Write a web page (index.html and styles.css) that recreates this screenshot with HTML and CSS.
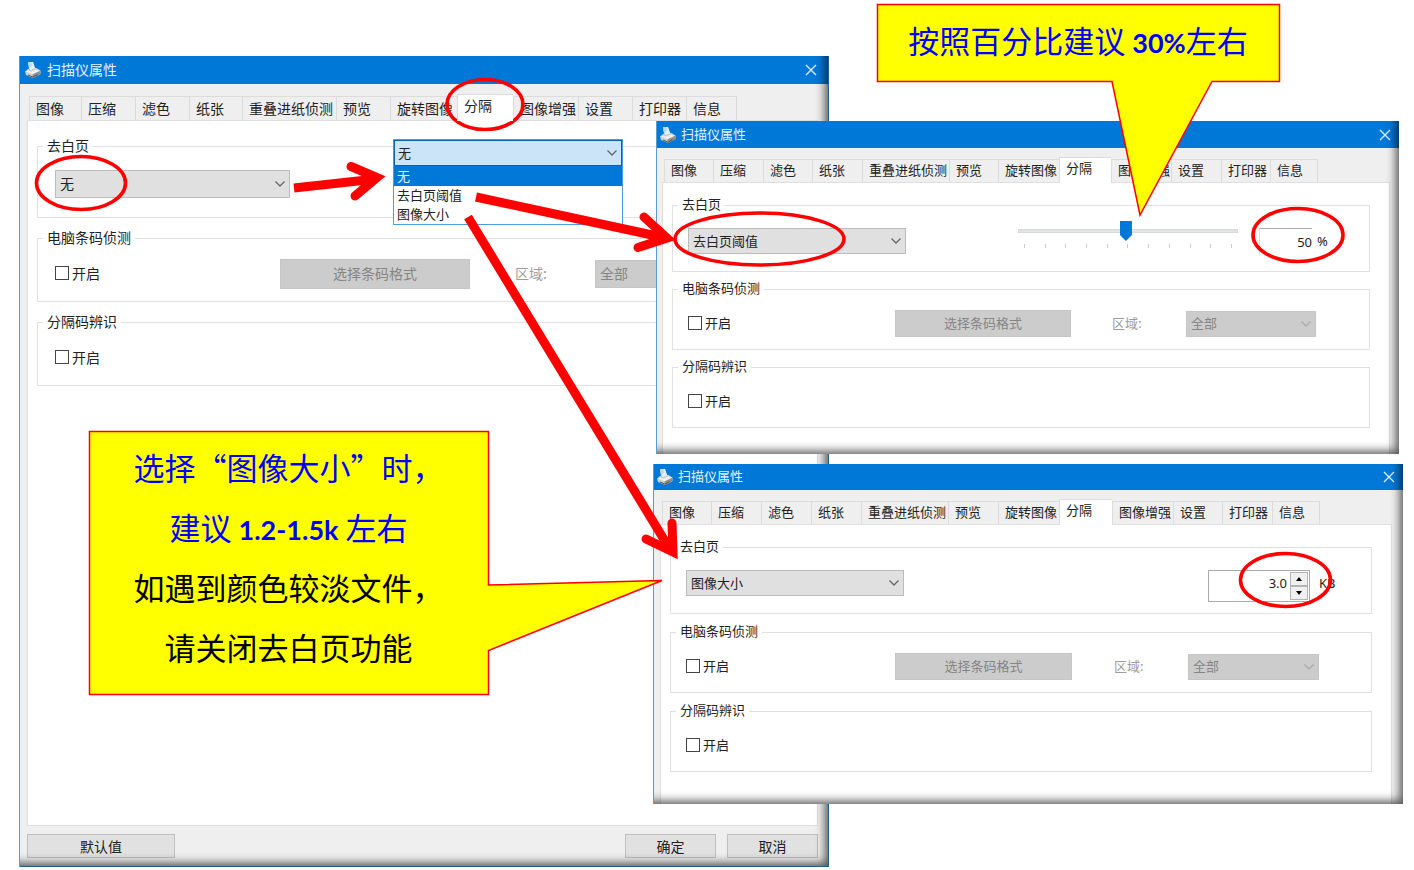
FILE: index.html
```html
<!DOCTYPE html>
<html lang="zh-CN">
<head>
<meta charset="utf-8">
<title>扫描仪属性</title>
<link rel="stylesheet" href="styles.css">
</head>
<body>
<svg class="defs" aria-hidden="true">
  <symbol id="printer" viewBox="0 0 16 16">
    <path d="M3 0l5-.2 2.500 7.200-6 1.600z" fill="#e6f3ff"/>
    <path d="M3 0l3-.1 1.500 3.600-3.500 3z" fill="#b9dcf8"/>
    <path d="M0 9.500l3.500-3 1 2 6.500-2.700L15.500 8.500v3.500L8 16l-7-3z" fill="#cfcfca"/>
    <path d="M1 9.600l6.500 2.700 7-3.500-3-1.500-5.500 2.400-2-1.400z" fill="#f0f0ec"/>
    <path d="M7.500 12.500l8-3.700V12.300L8 16z" fill="#8b8f94"/>
    <path d="M3 13l5 2.200 4.500-2.600" fill="none" stroke="#5a5142"/>
  </symbol>
  <symbol id="close" viewBox="0 0 12 12"><path d="M1 1l10 10M11 1L1 11" fill="none" stroke="#d9ecfb" stroke-width="1.400"/></symbol>
  <symbol id="chevron" viewBox="0 0 12 8"><path d="M1.500 1.500L6 6l4.500-4.500" fill="none" stroke="currentColor" stroke-width="1.300"/></symbol>
</svg>
<main class="board">

  <section class="window main-window" aria-label="扫描仪属性">
    <header class="title"><svg class="printer"><use href="#printer"/></svg><span>扫描仪属性</span><button class="close" aria-label="关闭"><svg><use href="#close"/></svg></button></header>
    <div class="content">
      <nav class="tabs"><button>图像</button><button>压缩</button><button>滤色</button><button>纸张</button><button>重叠进纸侦测</button><button>预览</button><button>旋转图像</button><button class="active">分隔</button><button>图像增强</button><button>设置</button><button>打印器</button><button>信息</button></nav>
      <div class="panel">
        <fieldset><legend>去白页</legend>
          <div class="row first">
            <span class="combo wide"><select aria-label="去白页"><option>无</option></select><svg><use href="#chevron"/></svg></span>
          </div>
        </fieldset>
        <fieldset><legend>电脑条码侦测</legend>
          <div class="row">
            <label class="check"><input type="checkbox">开启</label>
            <button class="format" disabled>选择条码格式</button>
            <label class="area" for="area1">区域:</label>
            <span class="combo off"><select id="area1" disabled><option>全部</option></select><svg><use href="#chevron"/></svg></span>
          </div>
        </fieldset>
        <fieldset><legend>分隔码辨识</legend>
          <div class="row"><label class="check"><input type="checkbox">开启</label></div>
        </fieldset>
      </div>
      <footer class="actions"><button class="default">默认值</button><button>确定</button><button>取消</button></footer>
    </div>
  </section>

  <div class="dropdown">
    <span class="combo"><select aria-label="去白页选项"><option>无</option></select><svg><use href="#chevron"/></svg></span>
    <ul role="listbox" aria-label="去白页选项">
      <li role="option" aria-selected="true">无</li>
      <li role="option">去白页阈值</li>
      <li role="option">图像大小</li>
    </ul>
  </div>

  <section class="window threshold-window" aria-label="去白页阈值">
    <header class="title"><svg class="printer"><use href="#printer"/></svg><span>扫描仪属性</span><button class="close" aria-label="关闭"><svg><use href="#close"/></svg></button></header>
    <div class="content">
      <nav class="tabs"><button>图像</button><button>压缩</button><button>滤色</button><button>纸张</button><button>重叠进纸侦测</button><button>预览</button><button>旋转图像</button><button class="active">分隔</button><button>图像增强</button><button>设置</button><button>打印器</button><button>信息</button></nav>
      <div class="panel">
        <fieldset><legend>去白页</legend>
          <div class="row first">
            <span class="combo wide"><select aria-label="去白页"><option>去白页阈值</option></select><svg><use href="#chevron"/></svg></span>
            <div class="slider">
              <input type="range" min="0" max="100" value="49" aria-label="阈值">
              <div class="ticks"><i></i><i></i><i></i><i></i><i></i><i></i><i></i><i></i><i></i><i></i><i></i></div>
            </div>
            <label class="percent"><input type="text" value="50">%</label>
          </div>
        </fieldset>
        <fieldset><legend>电脑条码侦测</legend>
          <div class="row">
            <label class="check"><input type="checkbox">开启</label>
            <button class="format" disabled>选择条码格式</button>
            <label class="area" for="area2">区域:</label>
            <span class="combo off"><select id="area2" disabled><option>全部</option></select><svg><use href="#chevron"/></svg></span>
          </div>
        </fieldset>
        <fieldset><legend>分隔码辨识</legend>
          <div class="row"><label class="check"><input type="checkbox">开启</label></div>
        </fieldset>
      </div>
    </div>
  </section>

  <section class="window size-window" aria-label="图像大小">
    <header class="title"><svg class="printer"><use href="#printer"/></svg><span>扫描仪属性</span><button class="close" aria-label="关闭"><svg><use href="#close"/></svg></button></header>
    <div class="content">
      <nav class="tabs"><button>图像</button><button>压缩</button><button>滤色</button><button>纸张</button><button>重叠进纸侦测</button><button>预览</button><button>旋转图像</button><button class="active">分隔</button><button>图像增强</button><button>设置</button><button>打印器</button><button>信息</button></nav>
      <div class="panel">
        <fieldset><legend>去白页</legend>
          <div class="row first">
            <span class="combo wide"><select aria-label="去白页"><option>图像大小</option></select><svg><use href="#chevron"/></svg></span>
            <div class="spin">
              <input id="size" type="text" value="3.0">
              <span class="steps"><button aria-label="增加"><svg viewBox="0 0 6 4"><path d="M0 4l3-4 3 4z"/></svg></button><button aria-label="减少"><svg viewBox="0 0 6 4"><path d="M0 0l3 4 3-4z"/></svg></button></span>
            </div>
            <label class="unit" for="size">KB</label>
          </div>
        </fieldset>
        <fieldset><legend>电脑条码侦测</legend>
          <div class="row">
            <label class="check"><input type="checkbox">开启</label>
            <button class="format" disabled>选择条码格式</button>
            <label class="area" for="area3">区域:</label>
            <span class="combo off"><select id="area3" disabled><option>全部</option></select><svg><use href="#chevron"/></svg></span>
          </div>
        </fieldset>
        <fieldset><legend>分隔码辨识</legend>
          <div class="row"><label class="check"><input type="checkbox">开启</label></div>
        </fieldset>
      </div>
    </div>
  </section>

  <svg class="marks" viewBox="0 0 1414 870" aria-hidden="true">
    <g fill="#ff0" stroke="#f00" stroke-width="1.500">
      <path d="M877.500 4.500H1279.500V81.500H1212L1140 215L1112 81.500H877.500z"/>
      <path d="M89.500 431.500H488.500V585L662 580.500L488.500 650.500V694.500H89.500z"/>
    </g>
    <g fill="none" stroke="#f00" stroke-width="3.600">
      <ellipse cx="81" cy="183" rx="44.500" ry="26.500"/>
      <ellipse cx="485" cy="104.500" rx="38" ry="25"/>
      <ellipse cx="759.500" cy="239" rx="84.500" ry="26"/>
      <ellipse cx="1298" cy="235" rx="45" ry="26.500"/>
      <ellipse cx="1285.500" cy="580" rx="45" ry="26.500"/>
    </g>
    <g fill="none" stroke="#f00" stroke-width="9">
      <path d="M294 188L376 179M476 197L666 238M468 217L671 551"/>
      <path d="M351 166.500L377 177.500L355 196" stroke-linecap="round" stroke-miterlimit="8"/>
      <path d="M644 217L667 238L638 247.500" stroke-linecap="round" stroke-miterlimit="8"/>
      <path d="M672 523L673 552L646 539" stroke-linecap="round" stroke-miterlimit="8"/>
    </g>
  </svg>

  <p class="note note-top">按照百分比建议 <b>30%</b>左右</p>
  <div class="note note-left">
    <p>选择“图像大小”时，</p>
    <p>建议 <b>1.2-1.5k</b> 左右</p>
    <p class="dark">如遇到颜色较淡文件，</p>
    <p class="dark">请关闭去白页功能</p>
  </div>
</main>
</body>
</html>
```
FILE: styles.css
```css
* { box-sizing: border-box; }
body { margin: 0; background: #fff; font-family: "Noto Sans CJK SC", sans-serif; color: #222; }
button, input, select { font: inherit; color: inherit; margin: 0; padding: 0; border: 0; border-radius: 0; appearance: none; background: none; }
p, ul { margin: 0; padding: 0; list-style: none; }
.defs { position: absolute; width: 0; height: 0; }
.board { position: relative; min-height: 870px; overflow: hidden; }

/* Dialog windows */
.window { position: absolute; display: flex; flex-direction: column; background: #efefef; border-left: 1px solid #5a9bd2; overflow: hidden; font-size: 13px; }
.window::after { content: ""; position: absolute; inset: 0; pointer-events: none; box-shadow: inset -9px -9px 10px -6px rgba(0, 0, 0, .65); }
.main-window {
  left: 19px; top: 56px; width: 810px; min-height: 811px; font-size: 14px;
  --title: 28px; --top: 10px; --tab: 24px; --pad: 15px; --combo: 28px; --wide: 235px;
  --cols: 52px 54px 54px 53px 94px 54px 67px 56px 65px 54px 54px 51px;
  --row: 225px 190px 45px 80px 140px; --rowh: 30px; --before: 14px; --after: 19px; --gap: 10px;
}
.main-window::after { border-right: 1px solid #1f5c90; border-bottom: 1px solid #1f5c90; }
.threshold-window, .size-window {
  --top: 9px; --tab: 23px; --pad: 12px; --combo: 26px; --wide: 218px;
  --row: 207px 176px 41px 74px 130px; --rowh: 27px; --before: 13px; --after: 17px; --gap: 8px;
}
.threshold-window { left: 656px; top: 121px; width: 743px; height: 333px; --title: 27px; --gap: 7px; --cols: 49px 50px 49px 50px 87px 49px 61px 52px 60px 50px 49px 48px; }
.size-window { left: 653px; top: 464px; width: 750px; height: 340px; --title: 26px; --row: 209px 177px 42px 74px 131px; --cols: 49px 50px 50px 50px 87px 50px 61px 53px 61px 49px 50px 48px; }

.title { flex: none; display: flex; align-items: center; gap: 6px; height: var(--title); padding: 0 12px 0 5px; background: #0078d7; color: #e4f2fd; }
.title span { height: 20px; line-height: 18px; }
.threshold-window .title, .size-window .title { padding: 0 8px 0 3px; gap: 5px; }
.printer { width: 16px; height: 16px; }
.close { display: flex; margin-left: auto; }
.close svg { width: 12px; height: 12px; }
.content { flex: 1; display: flex; flex-direction: column; padding: var(--top) 11px 0 7px; }
.threshold-window .content { padding: var(--top) 9px 0 5px; }
.size-window .content { padding-left: 6px; }

.tabs { display: grid; grid-template-columns: var(--cols); align-items: end; padding-left: 2px; }
.tabs button { height: var(--tab); padding: 0 0 2px 6px; text-align: left; line-height: 20px; white-space: nowrap; border: 1px solid #dcdcdc; border-width: 1px 0 0 1px; }
.tabs button:last-child { border-right-width: 1px; }
.tabs .active { height: calc(var(--tab) + 3px); margin-bottom: -1px; padding-bottom: 6px; background: #fff; position: relative; z-index: 1; }

.panel { flex: 1; display: flex; flex-direction: column; gap: var(--gap); padding: var(--pad) 19px 0 9px; background: #fff; border: 1px solid #dfdfdf; border-bottom: 0; }
.main-window .panel { border-bottom: 1px solid #dfdfdf; }
fieldset { margin: 0; padding: 0; min-width: 0; border: 1px solid #e0e0e0; }
legend { height: 20px; margin-left: 5px; padding: 0 4px; line-height: 18px; }
.row { display: grid; grid-template-columns: var(--row); align-items: center; min-height: var(--rowh); margin: 11px 0 12px 15px; }
.main-window .row { margin-left: 17px; }
.row.first { display: flex; margin-top: var(--before); margin-bottom: var(--after); min-height: 0; height: var(--combo); align-items: flex-start; }

/* Controls */
.combo { position: relative; display: block; height: var(--combo); }
.combo select { width: 100%; height: 100%; padding: 0 4px 2px; background: #e0e0e0; border: 1px solid #bcbcbc; display: block; }
.combo svg { position: absolute; right: 4px; top: 50%; width: 12px; height: 8px; margin-top: -4px; color: #666; pointer-events: none; }
.combo.wide { flex: none; width: var(--wide); }
.combo.off { grid-column: 5; }
.combo.off select, .format { background: #ccc; border: 1px solid #c6c6c6; color: #858585; opacity: 1; }
.combo.off svg { color: #aaa; }
.format { height: 100%; padding-bottom: 2px; }
.area { grid-column: 4; padding-bottom: 2px; color: #9c9c9c; }
.check { display: flex; align-items: center; gap: 3px; line-height: 20px; padding-bottom: 2px; }
.check input { width: 14px; height: 14px; border: 1px solid #444; background: #fff; }
.slider { flex: none; width: 220px; margin-left: 112px; }
.slider input { display: block; width: 100%; height: 4px; margin-top: 1px; background: #e2e5e5; border: 1px solid #d5d9d9; }
.slider input::-webkit-slider-thumb { appearance: none; width: 12px; height: 20px; background: #0078d7; clip-path: polygon(0 0, 100% 0, 100% 70%, 50% 100%, 0 70%); }
.ticks { display: flex; justify-content: space-between; padding: 11px 6px 0; }
.ticks i { width: 1px; height: 4px; background: #ccc; }
.percent { display: flex; align-items: center; gap: 5px; margin-left: 21px; height: 26px; font-family: "Noto Sans", sans-serif; font-size: 13px; }
.percent input { width: 53px; height: 100%; text-align: right; border-top: 1px solid #aaa; border-left: 1px solid #ddd; }
.spin { flex: none; display: flex; width: 102px; height: 32px; margin-left: 304px; border: 1px solid #aaa; padding: 1px; background: #fff; font-family: "Noto Sans", sans-serif; font-size: 13px; }
.spin input { flex: 1; min-width: 0; padding: 0 3px 6px 0; text-align: right; }
.steps { display: flex; flex-direction: column; width: 18px; }
.steps button { flex: 1; display: flex; align-items: center; justify-content: center; background: #f0f0f0; border: 1px solid #b4b4b4; }
.steps svg { width: 6px; height: 4px; }
.unit { margin-left: 9px; line-height: 26px; font-family: "Noto Sans", sans-serif; }
.actions { display: flex; gap: 11px; padding: 8px 0 9px; }
.actions button { width: 91px; height: 24px; background: #e1e1e1; border: 1px solid #bfbfbf; line-height: 20px; }
.actions .default { width: 148px; margin-right: auto; }

/* Open list */
.dropdown { position: absolute; left: 393px; top: 139px; width: 230px; border: 1px solid #4a9de0; background: #fff; font-size: 13px; --combo: 26px; }
.dropdown select { background: #cce4f7; border-color: #0b62ac; padding: 0 3px 2px; }
.dropdown li { height: 19px; padding-left: 3px; line-height: 18px; }
.dropdown [aria-selected] { height: 20px; background: #0078d7; color: #e4f2fd; line-height: 20px; }

/* Annotations */
.marks { position: absolute; left: 0; top: 0; width: 1414px; height: 870px; pointer-events: none; }
.note { position: absolute; color: #00f; font-size: 31px; line-height: 60px; text-align: center; white-space: nowrap; font-weight: 400; }
.note b { font-family: Lato, sans-serif; font-weight: 700; font-size: 27px; line-height: 30px; }
.note-top { left: 877px; top: 10px; width: 402px; }
.note-left { left: 89px; top: 437px; width: 399px; }
.note-left p { height: 60px; }
.dark { color: #000; }
```
